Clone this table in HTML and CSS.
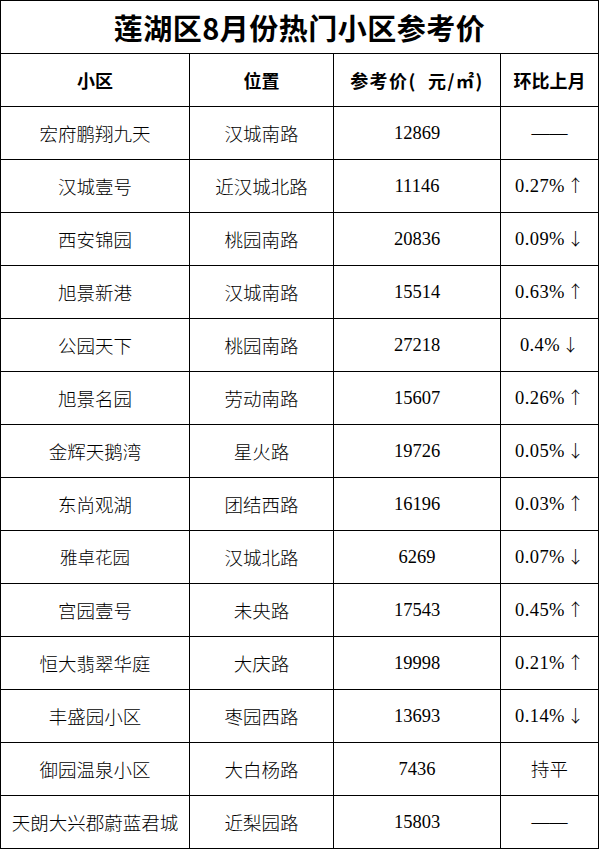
FILE: index.html
```html
<!DOCTYPE html>
<html lang="zh-CN">
<head>
<meta charset="utf-8">
<title>莲湖区8月份热门小区参考价</title>
<link rel="stylesheet" href="styles.css">
</head>
<body>
<table class="price-table">
  <colgroup>
    <col class="c-name">
    <col class="c-loc">
    <col class="c-price">
    <col class="c-change">
  </colgroup>
  <thead>
    <tr class="title-row"><th colspan="4" class="title">莲湖区8月份热门小区参考价</th></tr>
    <tr class="head-row">
      <th>小区</th>
      <th>位置</th>
      <th class="wide">参考价(&nbsp;&nbsp;元/㎡)</th>
      <th>环比上月</th>
    </tr>
  </thead>
  <tbody>
    <tr><td>宏府鹏翔九天</td><td>汉城南路</td><td class="num">12869</td><td class="chg"><span class="dash">——</span></td></tr>
    <tr><td>汉城壹号</td><td>近汉城北路</td><td class="num">11146</td><td class="chg">0.27%<span class="arr">↑</span></td></tr>
    <tr><td>西安锦园</td><td>桃园南路</td><td class="num">20836</td><td class="chg">0.09%<span class="arr">↓</span></td></tr>
    <tr><td>旭景新港</td><td>汉城南路</td><td class="num">15514</td><td class="chg">0.63%<span class="arr">↑</span></td></tr>
    <tr><td>公园天下</td><td>桃园南路</td><td class="num">27218</td><td class="chg">0.4%<span class="arr">↓</span></td></tr>
    <tr><td>旭景名园</td><td>劳动南路</td><td class="num">15607</td><td class="chg">0.26%<span class="arr">↑</span></td></tr>
    <tr><td>金辉天鹅湾</td><td>星火路</td><td class="num">19726</td><td class="chg">0.05%<span class="arr">↓</span></td></tr>
    <tr><td>东尚观湖</td><td>团结西路</td><td class="num">16196</td><td class="chg">0.03%<span class="arr">↑</span></td></tr>
    <tr><td class="alt">雅卓花园</td><td>汉城北路</td><td class="num">6269</td><td class="chg">0.07%<span class="arr">↓</span></td></tr>
    <tr><td>宫园壹号</td><td>未央路</td><td class="num">17543</td><td class="chg">0.45%<span class="arr">↑</span></td></tr>
    <tr><td>恒大翡翠华庭</td><td>大庆路</td><td class="num">19998</td><td class="chg">0.21%<span class="arr">↑</span></td></tr>
    <tr><td>丰盛园小区</td><td>枣园西路</td><td class="num">13693</td><td class="chg">0.14%<span class="arr">↓</span></td></tr>
    <tr><td>御园温泉小区</td><td>大白杨路</td><td class="num">7436</td><td class="chg"><span class="flat">持平</span></td></tr>
    <tr><td>天朗大兴郡蔚蓝君城</td><td>近梨园路</td><td class="num">15803</td><td class="chg"><span class="dash">——</span></td></tr>
  </tbody>
</table>
</body>
</html>
```

FILE: styles.css
```css
html, body {
  margin: 0;
  padding: 0;
  background: #fff;
}

body {
  font-family: "Noto Sans CJK SC", "Liberation Sans", sans-serif;
  color: #000;
}

.price-table {
  border-collapse: collapse;
  table-layout: fixed;
  width: 598px;
}

.c-name { width: 189px; }
.c-loc { width: 144px; }
.c-price { width: 167px; }
.c-change { width: 98px; }

.price-table th,
.price-table td {
  border: 1px solid #000;
  height: 52px;
  padding: 0;
  text-align: center;
  vertical-align: middle;
  white-space: nowrap;
  color: #000;
}

.price-table td {
  font-size: 18.5px;
  font-weight: 300;
  line-height: 1;
}

.title {
  font-size: 29px;
  font-weight: 700;
  letter-spacing: 0.5px;
}

.head-row th {
  font-size: 18px;
  font-weight: 700;
}

.head-row th.wide {
  letter-spacing: 1.5px;
}

.price-table td.num {
  font-family: "Liberation Serif", serif;
  font-size: 18.5px;
  font-weight: 400;
}

.price-table td.chg {
  font-family: "Liberation Serif", serif;
  font-size: 18.5px;
  font-weight: 400;
  letter-spacing: 0.4px;
}

.arr {
  font-family: "Noto Sans CJK SC", sans-serif;
  font-size: 17px;
  font-weight: 300;
  letter-spacing: 0;
  margin-left: 2px;
  color: #000;
}

.flat {
  font-family: "Noto Sans CJK SC", sans-serif;
  font-size: 18.5px;
  font-weight: 300;
  letter-spacing: 0;
}

.dash {
  font-family: "Liberation Serif", serif;
  font-size: 18px;
  font-weight: 400;
  letter-spacing: 0;
}

.price-table td.alt {
  font-size: 17.5px;
  font-weight: 300;
}
```
